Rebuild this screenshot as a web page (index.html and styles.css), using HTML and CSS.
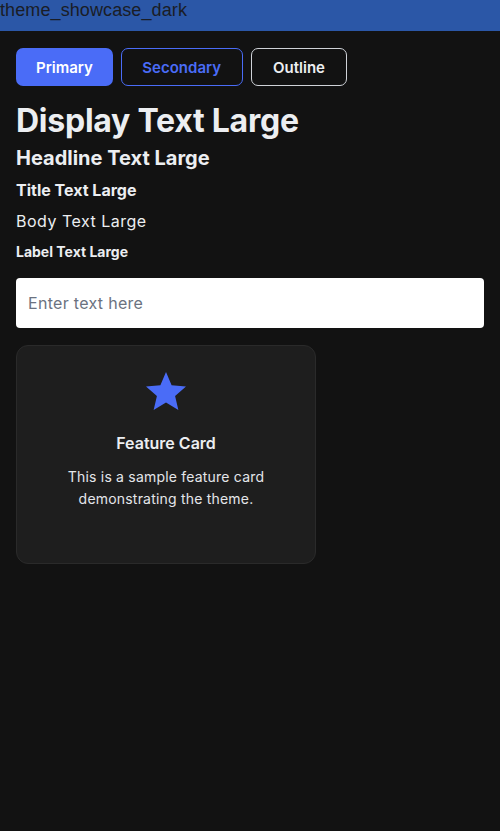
FILE: index.html
```html
<!DOCTYPE html>
<html lang="en">
<head>
<meta charset="utf-8">
<title>theme_showcase_dark</title>
<link rel="stylesheet" href="styles.css">
</head>
<body>
<div class="titlebar">theme_showcase_dark</div>
<main class="content">
  <div class="buttons">
    <button class="btn btn-primary">Primary</button>
    <button class="btn btn-secondary">Secondary</button>
    <button class="btn btn-outline">Outline</button>
  </div>
  <div class="typo">
    <h1 class="display">Display Text Large</h1>
    <h2 class="headline">Headline Text Large</h2>
    <h3 class="title">Title Text Large</h3>
    <p class="body-text">Body Text Large</p>
    <p class="label">Label Text Large</p>
  </div>
  <input class="field" type="text" placeholder="Enter text here">
  <div class="card">
    <svg class="star" viewBox="0 0 24 24" width="48" height="48"><path d="M12 17.27L18.18 21l-1.64-7.03L22 9.24l-7.19-.61L12 2 9.19 8.63 2 9.24l5.46 4.73L5.82 21z" fill="#4a6cf7"/></svg>
    <div class="card-title">Feature Card</div>
    <p class="card-text">This is a sample feature card demonstrating the theme.</p>
  </div>
</main>
</body>
</html>
```
FILE: styles.css
```css
* { box-sizing: border-box; }
html, body { margin: 0; padding: 0; }
body {
  width: 500px;
  height: 831px;
  background: #121212;
  font-family: Inter, "Noto Sans", sans-serif;
  color: #eceef1;
  overflow: hidden;
}
.titlebar {
  height: 31px;
  background: #2b57a7;
  color: #1a1d26;
  font-family: "Liberation Sans", Arial, sans-serif;
  font-size: 18px;
  line-height: 21px;
  letter-spacing: 0.1px;
}
.content {
  padding: 17px 16px 16px;
  display: flex;
  flex-direction: column;
}
.buttons { display: flex; gap: 8px; }
.btn {
  height: 38px;
  border-radius: 7px;
  font-family: Inter, sans-serif;
  font-size: 15px;
  font-weight: 600;
  padding: 0 20.5px;
  background: transparent;
}
.btn-primary { background: #4a6cf7; color: #fff; border: none; padding: 0 20px; }
.btn-secondary { color: #4a6cf7; border: 1.5px solid #4a6cf7; }
.btn-outline { color: #eceef1; border: 1.5px solid #cfd2d8; padding: 0 21.5px; }
.typo { display: flex; flex-direction: column; margin-top: 15px; }
.typo > * { margin: 0; }
.display { font-size: 32px; font-weight: 700; line-height: 40px; letter-spacing: -0.25px; }
.headline { font-size: 20px; font-weight: 700; line-height: 28px; margin-top: 3px; }
.title { font-size: 16px; font-weight: 700; line-height: 24px; margin-top: 6px; }
.body-text { font-size: 16px; font-weight: 400; line-height: 24px; letter-spacing: 0.5px; margin-top: 7px; }
.label { font-size: 14px; font-weight: 700; line-height: 20px; margin-top: 9px; }
.field {
  margin-top: 16px;
  height: 50px;
  width: 100%;
  border: none;
  border-radius: 4px;
  background: #fff;
  padding: 0 12px;
  font-family: Inter, sans-serif;
  font-size: 16px;
  color: #1a1d24;
  outline: none;
}
.field::placeholder { color: #6b7280; letter-spacing: 0.3px; }
.card {
  margin-top: 17px;
  width: 300px;
  height: 219px;
  background: #1e1e1e;
  border: 1px solid #2a2a2a;
  border-radius: 12px;
  display: flex;
  flex-direction: column;
  align-items: center;
  padding: 22px 24px 0;
}
.star { display: block; }
.card-title { margin-top: 16px; font-size: 16px; font-weight: 600; line-height: 22px; color: #eceef1; }
.card-text { margin: 12px 0 0; font-size: 14px; line-height: 22px; text-align: center; letter-spacing: 0.2px; color: #e4e6ea; }
```
